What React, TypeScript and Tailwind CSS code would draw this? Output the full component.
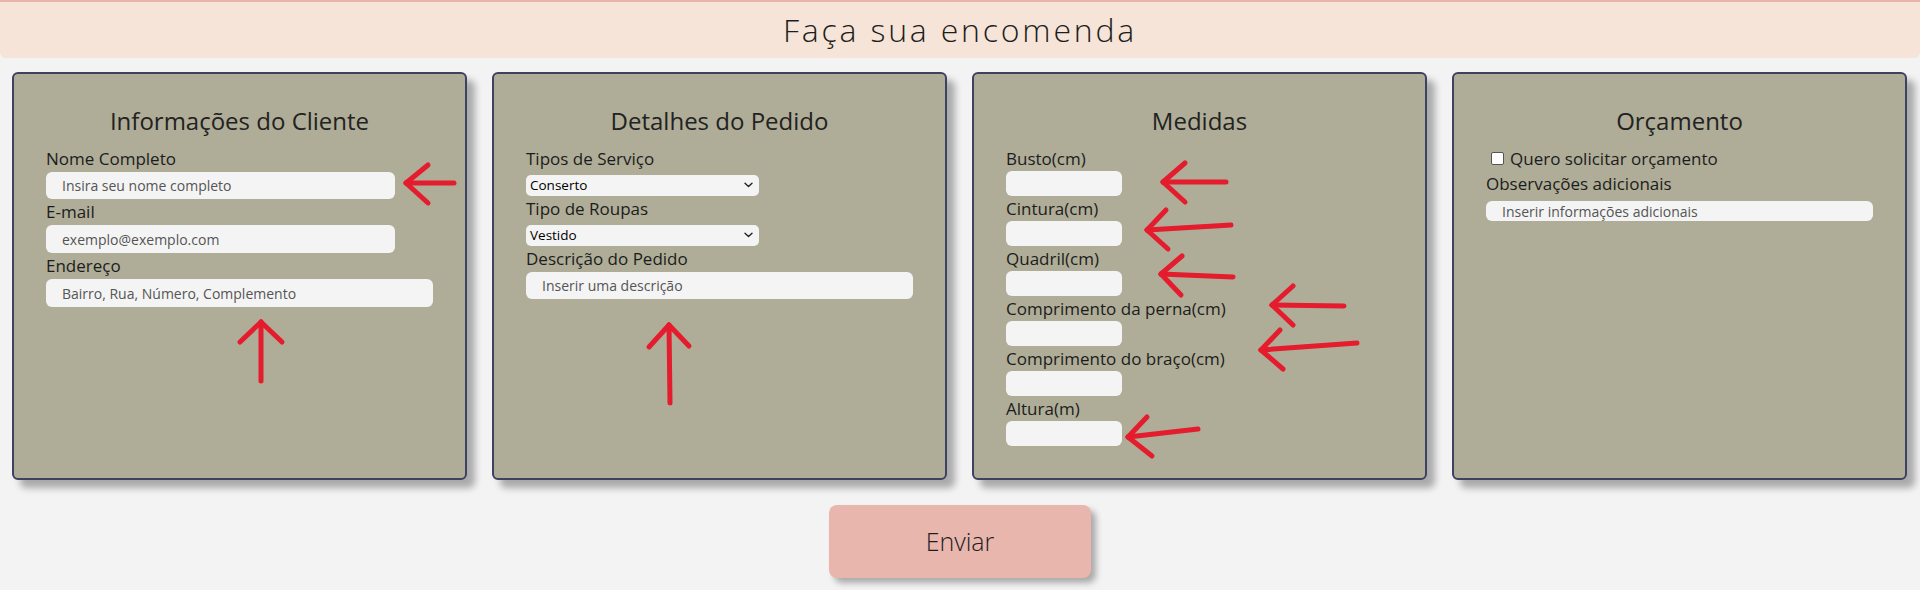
import React from "react";

const font = { fontFamily: '"Open Sans", "Liberation Sans", sans-serif' };

function Label({ children, h = "h-[26px]" }: { children: React.ReactNode; h?: string }) {
  return <div className={`${h} text-[17px] leading-[26px] text-[#1c1c1c]`}>{children}</div>;
}

function TextInput({ placeholder, w, h }: { placeholder?: string; w: string; h: string }) {
  return (
    <input
      readOnly
      placeholder={placeholder}
      className={`${w} ${h} block rounded-[6px] bg-[#f4f4f4] pl-4 text-[14px] text-[#333] outline-none placeholder:text-[#555]`}
    />
  );
}

function Select({ value }: { value: string }) {
  return (
    <div className="relative mt-[3px] flex h-[21px] w-[233px] items-center rounded-[5px] bg-[#f4f4f4] pl-1 text-[13.5px] text-black">
      <span>{value}</span>
      <svg className="absolute right-[6px] top-[7px]" width="9" height="6" viewBox="0 0 9 6">
        <path d="M1 1.2 L4.5 4.5 L8 1.2" fill="none" stroke="#222" strokeWidth="1.4" strokeLinecap="round" strokeLinejoin="round" />
      </svg>
    </div>
  );
}

function Card({ title, children }: { title: string; children: React.ReactNode }) {
  return (
    <div className="h-[408px] w-[455px] shrink-0 rounded-[6px] border-2 border-[#3e4160] bg-[#afad97] px-[32px] pt-[29px] shadow-[8px_8px_7px_rgba(0,0,0,0.3)]">
      <div className="mb-[7px] h-[36px] text-center text-[24px] leading-[36px] font-medium text-[#222]">{title}</div>
      {children}
    </div>
  );
}

function Arrows() {
  const lines: [number, number, number, number][] = [
    [406, 183, 454, 183], [406, 183, 428, 165], [406, 183, 428, 203],
    [261, 322, 261, 381], [261, 322, 240, 342], [261, 322, 282, 342],
    [669, 325, 670, 403], [669, 325, 649, 347], [669, 325, 689, 346],
    [1163, 182, 1226, 182], [1163, 182, 1185, 163], [1163, 182, 1185, 202],
    [1147, 230, 1231, 225], [1147, 230, 1166, 210], [1147, 230, 1168, 249],
    [1161, 274, 1233, 277], [1161, 274, 1182, 256], [1161, 274, 1181, 295],
    [1272, 305, 1344, 306], [1272, 305, 1293, 286], [1272, 305, 1293, 325],
    [1261, 350, 1357, 343], [1261, 350, 1280, 330], [1261, 350, 1283, 369],
    [1128, 437, 1198, 429], [1128, 437, 1147, 417], [1128, 437, 1152, 456],
  ];
  return (
    <svg className="pointer-events-none absolute left-0 top-0" width="1920" height="590" viewBox="0 0 1920 590">
      {lines.map(([x1, y1, x2, y2], i) => (
        <line key={i} x1={x1} y1={y1} x2={x2} y2={y2} stroke="#e41c2e" strokeWidth="5" strokeLinecap="round" />
      ))}
    </svg>
  );
}

export default function App() {
  return (
    <div className="relative h-[590px] w-[1920px] overflow-hidden bg-[#f3f3f3]" style={font}>
      <header className="flex h-[58px] items-center justify-center rounded-b-[6px] border-t-2 border-[#e9b3ab] bg-[#f5e4d7]">
        <h1 className="text-[32px] font-light tracking-[2.8px] text-[#1d1d1d]">Faça sua encomenda</h1>
      </header>

      <div className="mt-[14px] flex gap-[25px] px-3">
        <Card title="Informações do Cliente">
          <Label>Nome Completo</Label>
          <TextInput placeholder="Insira seu nome completo" w="w-[349px]" h="h-[27px]" />
          <Label>E-mail</Label>
          <TextInput placeholder="exemplo@exemplo.com" w="w-[349px]" h="h-[28px]" />
          <Label>Endereço</Label>
          <TextInput placeholder="Bairro, Rua, Número, Complemento" w="w-full" h="h-[28px]" />
        </Card>

        <Card title="Detalhes do Pedido">
          <Label>Tipos de Serviço</Label>
          <Select value="Conserto" />
          <Label>Tipo de Roupas</Label>
          <Select value="Vestido" />
          <Label>Descrição do Pedido</Label>
          <TextInput placeholder="Inserir uma descrição" w="w-full" h="h-[27px]" />
        </Card>

        <Card title="Medidas">
          {["Busto(cm)", "Cintura(cm)", "Quadril(cm)", "Comprimento da perna(cm)", "Comprimento do braço(cm)", "Altura(m)"].map((l) => (
            <div key={l}>
              <Label h="h-[25px]">{l}</Label>
              <TextInput w="w-[116px]" h="h-[25px]" />
            </div>
          ))}
        </Card>

        <Card title="Orçamento">
          <div className="flex h-[25px] items-center gap-[6px] pl-[5px] text-[17px] text-[#1c1c1c]">
            <span className="block h-[13px] w-[13px] rounded-[2px] border border-[#555] bg-white" />
            <span>Quero solicitar orçamento</span>
          </div>
          <Label>Observações adicionais</Label>
          <div className="mt-[4px]">
            <TextInput placeholder="Inserir informações adicionais" w="w-full" h="h-[20px]" />
          </div>
        </Card>
      </div>

      <div className="mt-[25px] flex justify-center">
        <button className="h-[73px] w-[262px] rounded-[8px] bg-[#e9b6ae] text-[25px] font-light text-[#1d1d1d] shadow-[5px_5px_6px_rgba(0,0,0,0.3)]">
          Enviar
        </button>
      </div>

      <Arrows />
    </div>
  );
}
